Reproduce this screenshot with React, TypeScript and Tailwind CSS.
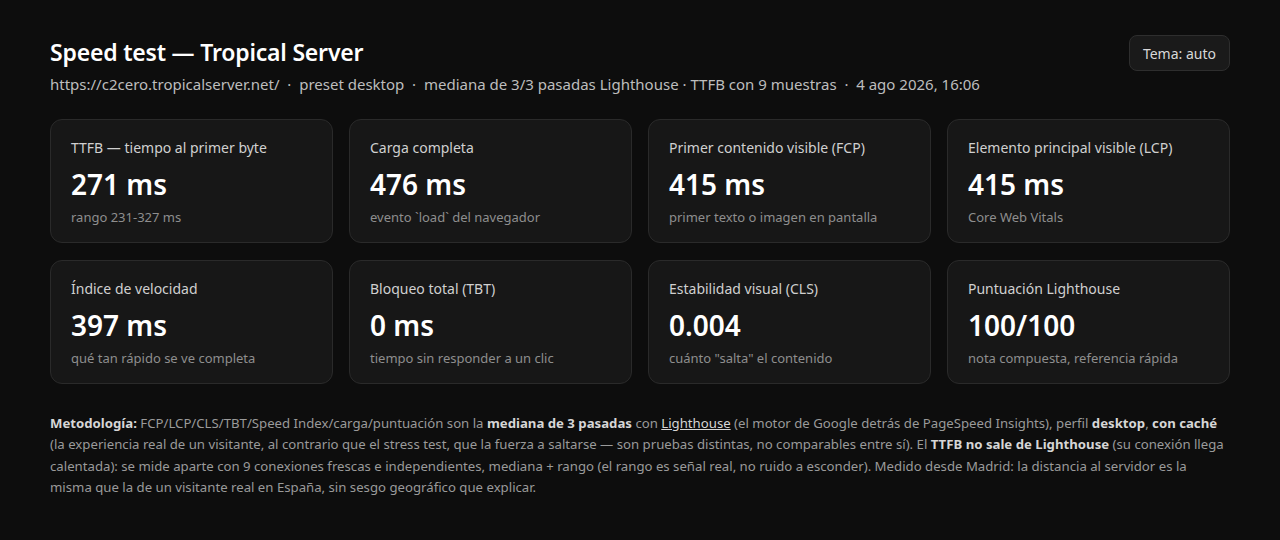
import React from "react";

const cards = [
  { label: "TTFB — tiempo al primer byte", value: "271 ms", sub: "rango 231-327 ms" },
  { label: "Carga completa", value: "476 ms", sub: "evento `load` del navegador" },
  { label: "Primer contenido visible (FCP)", value: "415 ms", sub: "primer texto o imagen en pantalla" },
  { label: "Elemento principal visible (LCP)", value: "415 ms", sub: "Core Web Vitals" },
  { label: "Índice de velocidad", value: "397 ms", sub: "qué tan rápido se ve completa" },
  { label: "Bloqueo total (TBT)", value: "0 ms", sub: "tiempo sin responder a un clic" },
  { label: "Estabilidad visual (CLS)", value: "0.004", sub: "cuánto \"salta\" el contenido" },
  { label: "Puntuación Lighthouse", value: "100/100", sub: "nota compuesta, referencia rápida" },
];

export default function App() {
  return (
    <div
      className="min-h-[540px] w-full bg-[#0d0d0d] px-[50px] pt-[36px] text-[#e8e8e8]"
      style={{ fontFamily: '"Segoe UI", "Noto Sans", sans-serif' }}
    >
      <div className="flex items-start justify-between">
        <div>
          <h1 className="text-[23px] font-semibold leading-[32px] tracking-[-0.2px] text-white">Speed test — Tropical Server</h1>
          <p className="mt-[6px] text-[15px] leading-[20px] text-[#bdbdbd]">
            https://c2cero.tropicalserver.net/ &nbsp;·&nbsp; preset desktop &nbsp;·&nbsp; mediana de 3/3 pasadas Lighthouse · TTFB con 9 muestras &nbsp;·&nbsp; 4 ago 2026, 16:06
          </p>
        </div>
        <button className="mt-[-1px] h-[36px] rounded-[8px] border border-[#2e2e2e] bg-[#1a1a1a] px-[13px] text-[14px] text-[#d8d8d8]">
          Tema: auto
        </button>
      </div>

      <div className="mt-[25px] grid grid-cols-4 gap-x-[16px] gap-y-[17px]">
        {cards.map((c) => (
          <div
            key={c.label}
            className="h-[124px] rounded-[12px] border border-[#2a2a2a] bg-[#171717] px-[20px] pt-[18px]"
          >
            <div className="text-[14px] leading-[20px] text-[#d0d0d0]">{c.label}</div>
            <div className="mt-[8px] text-[28px] font-semibold leading-[36px] text-white">{c.value}</div>
            <div className="mt-[6px] text-[13px] leading-[18px] text-[#8e8e8e]">{c.sub}</div>
          </div>
        ))}
      </div>

      <p className="mt-[29px] text-[13.2px] leading-[21.3px] text-[#9a9a9a]">
        <b className="font-bold text-[#d6d6d6]">Metodología:</b> FCP/LCP/CLS/TBT/Speed Index/carga/puntuación son la{" "}
        <b className="font-bold text-[#d6d6d6]">mediana de 3 pasadas</b> con{" "}
        <a className="text-[#d6d6d6] underline">Lighthouse</a> (el motor de Google detrás de PageSpeed Insights), perfil{" "}
        <b className="font-bold text-[#d6d6d6]">desktop</b>, <b className="font-bold text-[#d6d6d6]">con caché</b> (la experiencia real de un visitante, al contrario que el stress test, que la fuerza a saltarse — son pruebas distintas, no comparables entre sí). El{" "}
        <b className="font-bold text-[#d6d6d6]">TTFB no sale de Lighthouse</b> (su conexión llega calentada): se mide aparte con 9 conexiones frescas e independientes, mediana + rango (el rango es señal real, no ruido a esconder). Medido desde Madrid: la distancia al servidor es la misma que la de un visitante real en España, sin sesgo geográfico que explicar.
      </p>
    </div>
  );
}
